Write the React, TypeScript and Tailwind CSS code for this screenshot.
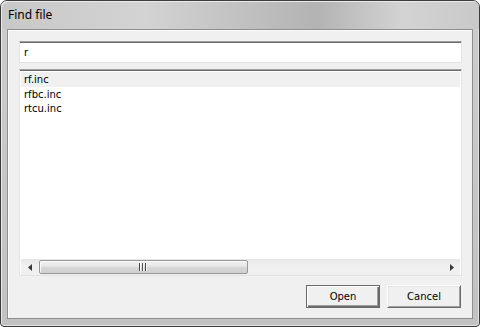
import React from "react";

const rows = ["rf.inc", "rfbc.inc", "rtcu.inc"];

function Grip() {
  return (
    <svg width="9" height="8" viewBox="0 0 9 8" className="block">
      <rect x="0" y="0" width="1" height="8" fill="#4a4a4a" />
      <rect x="1" y="0" width="1" height="8" fill="#f4f4f4" />
      <rect x="3" y="0" width="1" height="8" fill="#4a4a4a" />
      <rect x="4" y="0" width="1" height="8" fill="#f4f4f4" />
      <rect x="6" y="0" width="1" height="8" fill="#4a4a4a" />
      <rect x="7" y="0" width="1" height="8" fill="#f4f4f4" />
    </svg>
  );
}

export default function App() {
  return (
    <div className="w-[480px] h-[327px] flex flex-col rounded-t-[7px] rounded-b-[4px] border border-[#3c3c3c] bg-[linear-gradient(180deg,#cdcdcd_0%,#c2c2c2_100%)] shadow-[inset_1px_1px_0_#e8e8e8,inset_-1px_-1px_0_#e2e2e2] overflow-hidden font-['DejaVu_Sans',sans-serif]">
      <div className="h-[28px] shrink-0 flex items-center pl-[7px] rounded-t-[6px] bg-[linear-gradient(90deg,#c8c8c8_0%,#d3d3d3_30%,#bdbdbd_55%,#b3b3b3_66%,#d3d3d3_84%,#c9c9c9_100%)] shadow-[inset_1px_1px_0_#ebebeb]">
        <span className="text-[12px] text-black font-['Noto_Sans',sans-serif] leading-none -mt-[1px]">Find file</span>
      </div>
      <div className="flex-1 mx-[6px] mb-[7px] border border-[#8e8e8e] bg-[#f0f0f0] shadow-[inset_1px_1px_0_#fbfbfb] flex flex-col pl-[11px] pr-[10px] pt-[11px] pb-[10px]">
        <div className="h-[22px] shrink-0 bg-white border-t border-t-[#a0a0a0] border-x border-b border-[#e3e3e3] shadow-[inset_0_1px_0_#6a6a6a] flex items-center pl-[4px] text-[10px] text-black">
          r
        </div>
        <div className="mt-[6px] h-[207px] shrink-0 bg-white border-t border-t-[#a0a0a0] border-x border-b border-[#e3e3e3] shadow-[inset_0_1px_0_#6a6a6a] flex flex-col pt-[2px] pl-[1px] pr-[1px]">
          <div className="flex-1 flex flex-col text-[10px] text-black">
            {rows.map((r, i) => (
              <div
                key={r}
                className={
                  i === 0
                    ? "h-[15px] flex items-center pl-[3px] bg-[#f0f0f0]"
                    : "h-[14px] flex items-center pl-[3px]"
                }
              >
                {r}
              </div>
            ))}
          </div>
          <div className="h-[16px] shrink-0 flex items-stretch bg-[linear-gradient(180deg,#e6e6e6_0%,#f0f0f0_40%,#f0f0f0_100%)]">
            <div className="w-[17px] shrink-0 flex items-center justify-center">
              <svg width="4" height="7" viewBox="0 0 4 7">
                <path d="M4 0 L0 3.5 L4 7 Z" fill="#3a3a3a" />
              </svg>
            </div>
            <div className="w-[209px] shrink-0 my-[1px] ml-[1px] rounded-[2px] border border-[#989898] bg-[linear-gradient(180deg,#f2f2f2_0%,#e6e6e6_45%,#d6d6d6_55%,#d0d0d0_100%)] shadow-[inset_1px_1px_0_#fafafa] flex items-center justify-center">
              <Grip />
            </div>
            <div className="flex-1" />
            <div className="w-[17px] shrink-0 flex items-center justify-center">
              <svg width="4" height="7" viewBox="0 0 4 7">
                <path d="M0 0 L4 3.5 L0 7 Z" fill="#3a3a3a" />
              </svg>
            </div>
          </div>
        </div>
        <div className="mt-[9px] flex justify-end gap-[7px] pr-[1px]">
          <button className="w-[74px] h-[23px] bg-[#f0f0f0] border border-[#696969] shadow-[inset_1px_1px_0_#ffffff,inset_-1px_-1px_0_#696969,inset_-2px_-2px_0_#a0a0a0] text-[10px] text-black flex items-center justify-center pb-[1px]">
            Open
          </button>
          <button className="w-[74px] h-[23px] bg-[#f0f0f0] border-t border-l border-t-[#ffffff] border-l-[#ffffff] border-r border-b border-r-[#696969] border-b-[#696969] shadow-[inset_1px_1px_0_#e3e3e3,inset_-1px_-1px_0_#a0a0a0] text-[10px] text-black flex items-center justify-center pb-[1px]">
            Cancel
          </button>
        </div>
      </div>
    </div>
  );
}
